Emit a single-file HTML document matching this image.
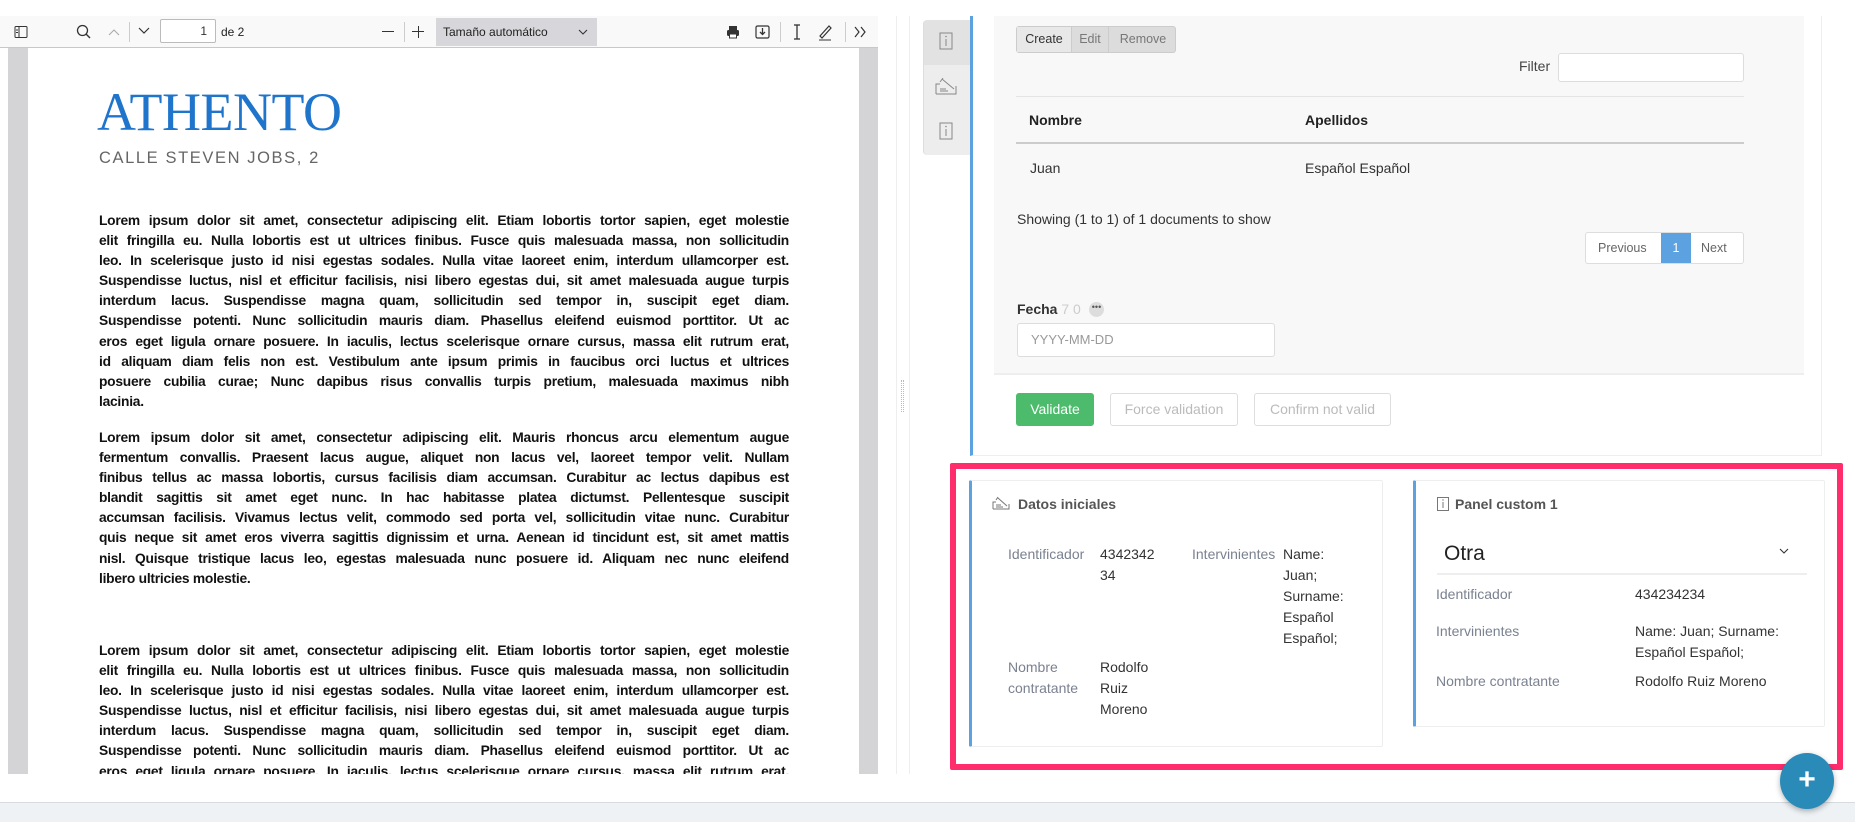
<!DOCTYPE html>
<html><head><meta charset="utf-8"><style>
*{box-sizing:border-box;margin:0;padding:0}
body{width:1855px;height:822px;overflow:hidden;background:#fff;font-family:"Liberation Sans",sans-serif;position:relative;color:#333}
.abs{position:absolute;white-space:nowrap}
#tb{left:0;top:16px;width:878px;height:32px;background:#f9f9fa;border-bottom:1px solid #c8c8c8}
#view{left:8px;top:48px;width:870px;height:726px;background:#d4d4d7;overflow:hidden}
#page{left:20px;top:0;width:831px;height:800px;background:#fff}
.ln{white-space:nowrap;text-align:justify;text-align-last:justify;font-weight:bold;font-size:13.8px;letter-spacing:-0.25px;height:20.1px;line-height:20.1px;color:#111;width:690px}
.ln.l{text-align-last:left}
.p{position:absolute;left:71px}
.t{font-size:14px;color:#333}
.g{color:#7a8190}
.btn{position:absolute;height:33px;border:1px solid #ddd;border-radius:3px;font-size:14px;line-height:31px;text-align:center;color:#bbb;background:#fff}
</style></head><body>
<div class="abs" id="tb">
 <svg class="abs" style="left:14px;top:9px" width="14" height="14" viewBox="0 0 14 14"><rect x="1" y="1.5" width="12" height="11" rx="1" fill="none" stroke="#333"/><line x1="5" y1="2" x2="5" y2="12" stroke="#333"/><line x1="2" y1="5" x2="4" y2="5" stroke="#333"/><line x1="2" y1="7.5" x2="4" y2="7.5" stroke="#333"/></svg>
 <svg class="abs" style="left:76px;top:8px" width="16" height="16"><circle cx="6.5" cy="6.5" r="5" fill="none" stroke="#333" stroke-width="1.3"/><line x1="10" y1="10" x2="14" y2="14" stroke="#333" stroke-width="1.4"/></svg>
 <svg class="abs" style="left:108px;top:12px" width="12" height="8"><polyline points="1,7 6,2 11,7" fill="none" stroke="#aaa" stroke-width="1.1"/></svg>
 <div class="abs" style="left:129px;top:6px;width:1px;height:20px;background:#ccc"></div>
 <svg class="abs" style="left:138px;top:11px" width="12" height="8"><polyline points="1,1 6,6 11,1" fill="none" stroke="#333" stroke-width="1.2"/></svg>
 <div class="abs" style="left:160px;top:3px;width:56px;height:24px;border:1px solid #bbb;border-radius:2px;background:#fff;font-size:12px;text-align:right;padding-right:8px;line-height:22px">1</div>
 <div class="abs" style="left:221px;top:9px;font-size:12px;color:#222">de 2</div>
 <div class="abs" style="left:382px;top:15px;width:12px;height:1.3px;background:#333"></div>
 <div class="abs" style="left:404px;top:6px;width:1px;height:20px;background:#ccc"></div>
 <div class="abs" style="left:412px;top:15px;width:12px;height:1.3px;background:#333"></div><div class="abs" style="left:417.5px;top:9.5px;width:1.3px;height:12px;background:#333"></div>
 <div class="abs" style="left:436px;top:2px;width:161px;height:28px;background:#d7d7db;font-size:12px;color:#222;line-height:28px;padding-left:7px">Tamaño automático</div>
 <svg class="abs" style="left:578px;top:13px" width="10" height="7"><polyline points="1,1 5,5 9,1" fill="none" stroke="#333" stroke-width="1.1"/></svg>
 <svg class="abs" style="left:726px;top:9px" width="14" height="14"><rect x="3" y="1" width="8" height="4" fill="#333"/><rect x="1" y="5" width="12" height="6" rx="1.5" fill="#333"/><rect x="3.5" y="9" width="7" height="4" fill="#fff" stroke="#333"/></svg>
 <svg class="abs" style="left:755px;top:8px" width="15" height="16"><rect x="1" y="2" width="13" height="12" rx="1.5" fill="none" stroke="#333" stroke-width="1.2"/><line x1="7.5" y1="4" x2="7.5" y2="10" stroke="#333" stroke-width="1.3"/><polyline points="5,8 7.5,10.5 10,8" fill="none" stroke="#333" stroke-width="1.3"/></svg>
 <div class="abs" style="left:780px;top:6px;width:1px;height:20px;background:#ccc"></div>
 <svg class="abs" style="left:792px;top:7px" width="10" height="18"><line x1="5" y1="2" x2="5" y2="16" stroke="#333" stroke-width="1.3"/><line x1="2" y1="2" x2="8" y2="2" stroke="#333" stroke-width="1.3"/><line x1="2" y1="16" x2="8" y2="16" stroke="#333" stroke-width="1.3"/></svg>
 <svg class="abs" style="left:817px;top:7px" width="16" height="18"><path d="M3 13 L12 3 L14 5 L5 15 Z" fill="none" stroke="#333" stroke-width="1.2"/><line x1="2" y1="17" x2="14" y2="17" stroke="#333"/></svg>
 <div class="abs" style="left:845px;top:6px;width:1px;height:20px;background:#ccc"></div>
 <svg class="abs" style="left:853px;top:9px" width="14" height="14"><polyline points="2,2 6,7 2,12" fill="none" stroke="#333" stroke-width="1.2"/><polyline points="8,2 12,7 8,12" fill="none" stroke="#333" stroke-width="1.2"/></svg>
</div>
<div class="abs" id="view"><div class="abs" id="page">
 <div class="abs" style="left:69px;top:33px;font-family:'Liberation Serif',serif;font-size:54px;color:#1f75cb;letter-spacing:-0.5px">ATHENTO</div>
 <div class="abs" style="left:71px;top:101px;font-size:16.5px;color:#666;letter-spacing:1.6px">CALLE STEVEN JOBS, 2</div>
 <div class="p" style="top:163px">
 <div class="ln">Lorem ipsum dolor sit amet, consectetur adipiscing elit. Etiam lobortis tortor sapien, eget molestie</div>
 <div class="ln">elit fringilla eu. Nulla lobortis est ut ultrices finibus. Fusce quis malesuada massa, non sollicitudin</div>
 <div class="ln">leo. In scelerisque justo id nisi egestas sodales. Nulla vitae laoreet enim, interdum ullamcorper est.</div>
 <div class="ln">Suspendisse luctus, nisl et efficitur facilisis, nisi libero egestas dui, sit amet malesuada augue turpis</div>
 <div class="ln">interdum lacus. Suspendisse magna quam, sollicitudin sed tempor in, suscipit eget diam.</div>
 <div class="ln">Suspendisse potenti. Nunc sollicitudin mauris diam. Phasellus eleifend euismod porttitor. Ut ac</div>
 <div class="ln">eros eget ligula ornare posuere. In iaculis, lectus scelerisque ornare cursus, massa elit rutrum erat,</div>
 <div class="ln">id aliquam diam felis non est. Vestibulum ante ipsum primis in faucibus orci luctus et ultrices</div>
 <div class="ln">posuere cubilia curae; Nunc dapibus risus convallis turpis pretium, malesuada maximus nibh</div>
 <div class="ln l">lacinia.</div>
 </div>
 <div class="p" style="top:380px">
 <div class="ln">Lorem ipsum dolor sit amet, consectetur adipiscing elit. Mauris rhoncus arcu elementum augue</div>
 <div class="ln">fermentum convallis. Praesent lacus augue, aliquet non lacus vel, laoreet tempor velit. Nullam</div>
 <div class="ln">finibus tellus ac massa lobortis, cursus facilisis diam accumsan. Curabitur ac lectus dapibus est</div>
 <div class="ln">blandit sagittis sit amet eget nunc. In hac habitasse platea dictumst. Pellentesque suscipit</div>
 <div class="ln">accumsan facilisis. Vivamus lectus velit, commodo sed porta vel, sollicitudin vitae nunc. Curabitur</div>
 <div class="ln">quis neque sit amet eros viverra sagittis dignissim et urna. Aenean id tincidunt est, sit amet mattis</div>
 <div class="ln">nisl. Quisque tristique lacus leo, egestas malesuada nunc posuere id. Aliquam nec nunc eleifend</div>
 <div class="ln l">libero ultricies molestie.</div>
 </div>
 <div class="p" style="top:593px">
 <div class="ln">Lorem ipsum dolor sit amet, consectetur adipiscing elit. Etiam lobortis tortor sapien, eget molestie</div>
 <div class="ln">elit fringilla eu. Nulla lobortis est ut ultrices finibus. Fusce quis malesuada massa, non sollicitudin</div>
 <div class="ln">leo. In scelerisque justo id nisi egestas sodales. Nulla vitae laoreet enim, interdum ullamcorper est.</div>
 <div class="ln">Suspendisse luctus, nisl et efficitur facilisis, nisi libero egestas dui, sit amet malesuada augue turpis</div>
 <div class="ln">interdum lacus. Suspendisse magna quam, sollicitudin sed tempor in, suscipit eget diam.</div>
 <div class="ln">Suspendisse potenti. Nunc sollicitudin mauris diam. Phasellus eleifend euismod porttitor. Ut ac</div>
 <div class="ln">eros eget ligula ornare posuere. In iaculis, lectus scelerisque ornare cursus, massa elit rutrum erat,</div>
 </div>
</div></div>
<!-- splitter -->
<div class="abs" style="left:896px;top:16px;width:14px;height:758px;background:#fff;border-left:1px solid #eee;border-right:1px solid #eee"></div>
<div class="abs" style="left:901px;top:380px;width:3px;height:32px;border-left:1px dotted #bbb;border-right:1px dotted #bbb"></div>
<!-- sidebar tabs -->
<div class="abs" style="left:923px;top:20px;width:47px;height:135px;background:#ededed;border-radius:4px 0 0 4px;border-left:1px solid #ddd"></div>
<div class="abs" style="left:924px;top:20px;width:46px;height:45px;background:#e2e2e2;border-radius:4px 0 0 0"></div>
<svg class="abs" style="left:939px;top:32px" width="14" height="18"><rect x="1" y="1" width="12" height="16" fill="none" stroke="#888"/><line x1="7" y1="7" x2="7" y2="14" stroke="#888"/><circle cx="7" cy="4.5" r="0.8" fill="#888"/></svg>
<svg class="abs" style="left:934px;top:76px" width="24" height="20"><path d="M2 18 H22 V10 M2 18 V8 H6 M8 3 L20 13 M6 6 L9 2" fill="none" stroke="#888"/><line x1="6" y1="13" x2="12" y2="13" stroke="#888"/><line x1="6" y1="15" x2="14" y2="15" stroke="#888"/></svg>
<svg class="abs" style="left:939px;top:122px" width="14" height="18"><rect x="1" y="1" width="12" height="16" fill="none" stroke="#888"/><line x1="7" y1="7" x2="7" y2="14" stroke="#888"/><circle cx="7" cy="4.5" r="0.8" fill="#888"/></svg>
<!-- main card -->
<div class="abs" style="left:970px;top:16px;width:852px;height:440px;background:#fff;border-left:3px solid #5da2e0;border-bottom:1px solid #eee;border-right:1px solid #eee"></div>
<div class="abs" style="left:994px;top:16px;width:810px;height:359px;background:#f8f8f8;border-bottom:2px solid #eee"></div>
<div class="abs" style="left:1016px;top:26px;width:160px;height:27px;border:1px solid #ccc;border-radius:3px;background:#dcdcdc;font-size:12.5px;line-height:25px;color:#777">
 <span class="abs" style="left:0;width:54px;height:25px;background:#e8e8e8;text-align:center;color:#333">Create</span>
 <span class="abs" style="left:54px;width:38px;text-align:center;border-left:1px solid #ccc;border-right:1px solid #ccc">Edit</span>
 <span class="abs" style="left:93px;width:66px;text-align:center">Remove</span>
</div>
<div class="abs t" style="left:1519px;top:58px;color:#444">Filter</div>
<div class="abs" style="left:1558px;top:53px;width:186px;height:29px;background:#fff;border:1px solid #ddd;border-radius:3px"></div>
<div class="abs" style="left:1016px;top:96px;width:728px;height:1px;background:#e4e4e4"></div>
<div class="abs t" style="left:1029px;top:112px;font-weight:bold;color:#222">Nombre</div>
<div class="abs t" style="left:1305px;top:112px;font-weight:bold;color:#222">Apellidos</div>
<div class="abs" style="left:1016px;top:142px;width:728px;height:2px;background:#ccc"></div>
<div class="abs t" style="left:1030px;top:160px">Juan</div>
<div class="abs t" style="left:1305px;top:160px">Español Español</div>
<div class="abs t" style="left:1017px;top:211px">Showing (1 to 1) of 1 documents to show</div>
<div class="abs" style="left:1585px;top:232px;width:159px;height:32px;border:1px solid #ddd;border-radius:3px;background:#fff;font-size:12.5px;line-height:30px;color:#666">
 <span class="abs" style="left:12px">Previous</span>
 <span class="abs" style="left:75px;width:30px;height:30px;background:#5da2e0;color:#fff;text-align:center">1</span>
 <span class="abs" style="left:115px">Next</span>
</div>
<div class="abs t" style="left:1017px;top:301px;font-weight:bold;color:#333">Fecha <span style="color:#ccc;font-weight:normal">7 0</span></div>
<div class="abs" style="left:1089px;top:302px;width:15px;height:15px;border-radius:50%;background:#ddd;font-size:9px;line-height:11px;text-align:center;color:#555">•••</div>
<div class="abs" style="left:1017px;top:323px;width:258px;height:34px;background:#fff;border:1px solid #ddd;border-radius:3px;font-size:13px;color:#999;line-height:32px;padding-left:13px">YYYY-MM-DD</div>
<div class="btn" style="left:1016px;top:393px;width:78px;background:#4cbb6c;border-color:#4cbb6c;color:#fff">Validate</div>
<div class="btn" style="left:1110px;top:393px;width:128px">Force validation</div>
<div class="btn" style="left:1254px;top:393px;width:137px">Confirm not valid</div>
<!-- pink box -->
<div class="abs" style="left:950px;top:463px;width:893px;height:307px;border:6px solid #ff2d6b;border-radius:2px"></div>
<!-- card 1 -->
<div class="abs" style="left:969px;top:480px;width:414px;height:267px;background:#fff;border:1px solid #eee;border-left:3px solid #5da2e0;border-radius:2px"></div>
<svg class="abs" style="left:992px;top:496px" width="18" height="14"><path d="M1 13 H17 V8 M1 13 V6 H4 M6 2 L15 10 M4 4 L6 1" fill="none" stroke="#777"/><line x1="4" y1="9" x2="9" y2="9" stroke="#777"/><line x1="4" y1="11" x2="11" y2="11" stroke="#777"/></svg>
<div class="abs t" style="left:1018px;top:496px;font-weight:bold;color:#555">Datos iniciales</div>
<div style="position:absolute;font-size:14px;line-height:21px">
<div class="abs g" style="left:1008px;top:544px">Identificador</div>
<div class="abs" style="left:1100px;top:544px">4342342<br>34</div>
<div class="abs g" style="left:1192px;top:544px">Intervinientes</div>
<div class="abs" style="left:1283px;top:544px">Name:<br>Juan;<br>Surname:<br>Español<br>Español;</div>
<div class="abs g" style="left:1008px;top:657px">Nombre<br>contratante</div>
<div class="abs" style="left:1100px;top:657px">Rodolfo<br>Ruiz<br>Moreno</div>
</div>
<!-- card 2 -->
<div class="abs" style="left:1413px;top:480px;width:412px;height:247px;background:#fff;border:1px solid #eee;border-left:3px solid #5da2e0;border-radius:2px"></div>
<svg class="abs" style="left:1437px;top:497px" width="12" height="14"><rect x="0.5" y="0.5" width="11" height="13" fill="none" stroke="#777"/><line x1="6" y1="5" x2="6" y2="11" stroke="#777"/><circle cx="6" cy="3" r="0.7" fill="#777"/></svg>
<div class="abs t" style="left:1455px;top:496px;font-weight:bold;color:#555">Panel custom 1</div>
<div class="abs" style="left:1444px;top:542px;font-size:21px;color:#222">Otra</div>
<svg class="abs" style="left:1779px;top:548px" width="10" height="7"><polyline points="1,1 5,5 9,1" fill="none" stroke="#333" stroke-width="1.1"/></svg>
<div class="abs" style="left:1437px;top:573px;width:370px;height:2px;background:#eee"></div>
<div style="position:absolute;font-size:14px;line-height:21px">
<div class="abs g" style="left:1436px;top:584px">Identificador</div>
<div class="abs" style="left:1635px;top:584px">434234234</div>
<div class="abs g" style="left:1436px;top:621px">Intervinientes</div>
<div class="abs" style="left:1635px;top:621px">Name: Juan; Surname:<br>Español Español;</div>
<div class="abs g" style="left:1436px;top:671px">Nombre contratante</div>
<div class="abs" style="left:1635px;top:671px">Rodolfo Ruiz Moreno</div>
</div>
<!-- bottom bar -->
<div class="abs" style="left:0;top:802px;width:1855px;height:20px;background:#eef2f5;border-top:1px solid #d6dbe0"></div>
<!-- fab -->
<div class="abs" style="left:1780px;top:753px;width:54px;height:56px;border-radius:50%;background:#2a8ab8;box-shadow:0 2px 6px rgba(0,0,0,.3);color:#fff;font-size:30px;font-weight:bold;text-align:center;line-height:54px">+</div>
</body></html>
